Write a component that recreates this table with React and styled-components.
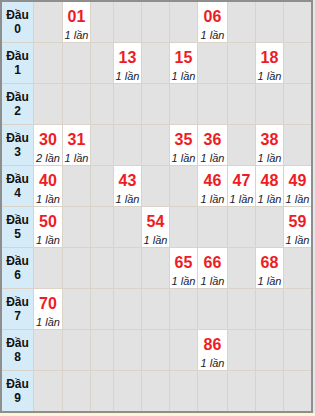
import React from 'react';
import styled, { createGlobalStyle } from 'styled-components';

const GlobalStyle = createGlobalStyle`
  html, body {
    margin: 0;
    padding: 0;
    background: #e6e6e6;
  }
  body {
    font-family: Arial, "Liberation Sans", sans-serif;
    width: 315px;
    height: 416px;
    overflow: hidden;
  }
`;

const Board = styled.div`
  width: 309px;
  border: 2px solid #8e8e8e;
  display: grid;
  grid-template-columns: 31px 28px 27px 22px 27px 27px 27px 29px 27px 27px 27px;
  grid-auto-rows: 40px;
  gap: 1px;
  background: #d9d3ca;
`;

const HeadCell = styled.div`
  background: #d6ebf8;
  display: flex;
  flex-direction: column;
  align-items: center;
  justify-content: center;
  font-size: 12px;
  font-weight: bold;
  line-height: 14px;
  color: #111;
`;

const Cell = styled.div`
  background: ${(p) => (p.$hit ? '#ffffff' : '#e2e2e2')};
  display: flex;
  flex-direction: column;
  align-items: center;
  padding-top: 5px;
  box-sizing: border-box;
`;

const Num = styled.div`
  font-size: 16px;
  font-weight: bold;
  color: #ee1c25;
  line-height: 20px;
`;

const Count = styled.div`
  font-size: 11px;
  font-style: italic;
  color: #1a1a2e;
  line-height: 13px;
  margin-top: 2px;
  white-space: nowrap;
`;

const Footer = styled.div`
  height: 4px;
  background: #fdf6d5;
`;

const hits = {
  '01': 1, '06': 1,
  '13': 1, '15': 1, '18': 1,
  '30': 2, '31': 1, '35': 1, '36': 1, '38': 1,
  '40': 1, '43': 1, '46': 1, '47': 1, '48': 1, '49': 1,
  '50': 1, '54': 1, '59': 1,
  '65': 1, '66': 1, '68': 1,
  '70': 1,
  '86': 1,
};

export default function App() {
  const rows = [0, 1, 2, 3, 4, 5, 6, 7, 8, 9];
  return (
    <>
      <GlobalStyle />
      <Board>
        {rows.map((r) => (
          <React.Fragment key={r}>
            <HeadCell>
              <span>Đầu</span>
              <span>{r}</span>
            </HeadCell>
            {rows.map((c) => {
              const key = `${r}${c}`;
              const n = hits[key];
              return (
                <Cell key={key} $hit={!!n}>
                  {n && (
                    <>
                      <Num>{key}</Num>
                      <Count>{n} lần</Count>
                    </>
                  )}
                </Cell>
              );
            })}
          </React.Fragment>
        ))}
      </Board>
      <Footer />
    </>
  );
}
